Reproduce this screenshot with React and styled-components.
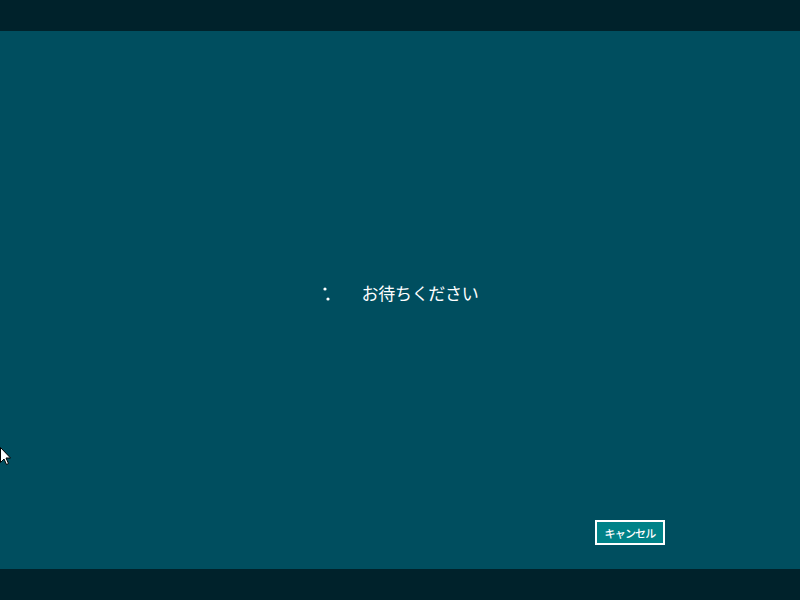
import styled, { createGlobalStyle } from "styled-components";

const Global = createGlobalStyle`
  html, body {
    margin: 0;
    padding: 0;
    background: #00222b;
  }
  #root {
    height: 100vh;
  }
`;

const Screen = styled.div`
  display: flex;
  flex-direction: column;
  height: 600px;
  width: 800px;
  position: relative;
  font-family: "Noto Sans CJK JP", "Noto Sans", sans-serif;
`;

const Bar = styled.div`
  height: 31px;
  flex-shrink: 0;
  background: #00222b;
`;

const Main = styled.div`
  flex: 1;
  display: flex;
  flex-direction: column;
  background: #004e5f;
`;

const Center = styled.div`
  flex: 1;
  display: flex;
  align-items: center;
  justify-content: center;
  padding-top: 34px;
`;

const Row = styled.div`
  display: flex;
  align-items: center;
  gap: 22px;
  margin-right: 6px;
`;

const Spinner = styled.svg`
  width: 24px;
  height: 24px;
  display: block;
`;

const Message = styled.span`
  color: #ffffff;
  font-size: 17px;
  letter-spacing: -0.3px;
  line-height: 1;
`;

const Footer = styled.div`
  display: flex;
  justify-content: flex-end;
  padding: 0 135px 24px 0;
`;

const Button = styled.button`
  width: 70px;
  height: 25px;
  box-sizing: border-box;
  border: 2px solid #ffffff;
  background: #008288;
  color: #ffffff;
  font-family: "Noto Sans CJK JP", "Noto Sans", sans-serif;
  font-size: 11px;
  letter-spacing: -0.8px;
  font-weight: 500;
  padding: 0;
  cursor: default;
`;

const Cursor = styled.svg`
  position: absolute;
  left: 0;
  top: 447px;
  width: 12px;
  height: 19px;
`;

export default function App() {
  return (
    <>
      <Global />
      <Screen>
        <Bar />
        <Main>
          <Center>
            <Row>
              <Spinner viewBox="0 0 24 24">
                <circle cx="9" cy="8" r="1.6" fill="#ffffff" />
                <circle cx="12" cy="18" r="1.6" fill="#ffffff" />
              </Spinner>
              <Message>お待ちください</Message>
            </Row>
          </Center>
          <Footer>
            <Button>キャンセル</Button>
          </Footer>
        </Main>
        <Bar />
        <Cursor viewBox="0 0 12 19">
          <path
            d="M0.5 0.5 L0.5 15.5 L4 12 L6.5 17.5 L8.5 16.5 L6 11 L10.5 11 Z"
            fill="#ffffff"
            stroke="#000000"
            strokeWidth="1"
          />
        </Cursor>
      </Screen>
    </>
  );
}
